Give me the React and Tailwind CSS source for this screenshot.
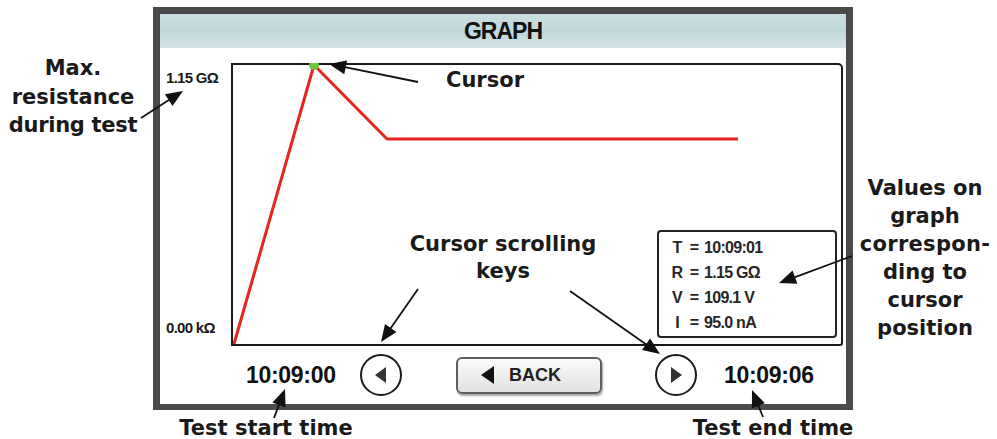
const annoFont = { fontFamily: '"DejaVu Sans", Verdana, sans-serif' };
const screenFont = { fontFamily: '"Liberation Sans", Arial, sans-serif' };

// arrows as [tailX, tailY, tipX, tipY]
const arrows = [
  [141, 118, 183, 91],
  [418, 82, 329, 64],
  [418, 289, 381, 342],
  [570, 291, 660, 354],
  [852, 256, 779, 283],
  [274, 418, 285, 389],
  [763, 417, 752, 390],
];

const Arrow = ({ a }) => {
  const [x1, y1, x2, y2] = a;
  const dx = x2 - x1;
  const dy = y2 - y1;
  const len = Math.hypot(dx, dy);
  const ux = dx / len;
  const uy = dy / len;
  const hl = 17;
  const hw = 7;
  const bx = x2 - ux * hl;
  const by = y2 - uy * hl;
  const pts = `${x2},${y2} ${bx - uy * hw},${by + ux * hw} ${bx + uy * hw},${by - ux * hw}`;
  return (
    <g>
      <line x1={x1} y1={y1} x2={bx + ux * 2} y2={by + uy * 2} stroke="#111" strokeWidth="1.8" />
      <polygon points={pts} fill="#111" />
    </g>
  );
};

const CircleKey = ({ dir }) => (
  <div className="w-[42px] h-[42px] rounded-full border-2 border-[#1c1c1c] bg-white flex items-center justify-center shrink-0">
    <svg width="16" height="18" viewBox="0 0 16 18">
      {dir === 'left' ? (
        <polygon points="13,1 13,17 2,9" fill="#333" />
      ) : (
        <polygon points="3,1 3,17 14,9" fill="#333" />
      )}
    </svg>
  </div>
);

const InfoRow = ({ k, v }) => (
  <div className="flex h-[25px] items-center">
    <span className="w-[16px] text-center">{k}</span>
    <span className="w-[18px] text-center">=</span>
    <span className="pl-[1px]">{v}</span>
  </div>
);

export default function App() {
  return (
    <div className="relative w-[997px] h-[439px] bg-white overflow-hidden">
      <div className="flex">
        {/* left annotation */}
        <div
          className="w-[153px] pr-[7px] pt-[54px] text-center text-[21px] font-bold leading-[28.5px] text-[#1a1a1a]"
          style={annoFont}
        >
          <div>Max.</div>
          <div>resistance</div>
          <div className="tracking-[-0.3px]">during test</div>
        </div>

        {/* device screen */}
        <div
          className="mt-[7px] w-[700px] h-[403px] border-l-[7px] border-r-[7px] border-t-[7px] border-b-[6px] border-[#4a4a4a] flex flex-col bg-white"
          style={screenFont}
        >
          <div className="h-[34px] bg-gradient-to-b from-[#cadfe2] via-[#c0d7da] to-[#d4e4e6] flex items-center justify-center">
            <span className="text-[23px] font-bold text-[#111] tracking-[-1px] scale-y-[1.05]">GRAPH</span>
          </div>

          <div className="flex pt-[15px] pr-[3px]">
            <div className="w-[71px] h-[283px] flex flex-col justify-between pl-[6px] pt-[4px] pb-[7px] text-[15px] font-bold text-[#1a1a1a] tracking-[-0.7px]">
              <span>1.15 GΩ</span>
              <span>0.00 kΩ</span>
            </div>

            <div className="relative w-[612px] h-[283px] border-2 border-[#1a1a1a] rounded-tr-[5px] rounded-br-[3px] bg-white">
              <svg className="absolute -left-[2px] -top-[2px]" width="612" height="283" viewBox="0 0 612 283">
                <polyline
                  points="3,281 83,2 156,76 507,76"
                  fill="none"
                  stroke="#e5261f"
                  strokeWidth="3"
                  strokeLinejoin="round"
                />
                <circle cx="83" cy="2" r="5" fill="#6cc53c" />
              </svg>

              <div className="absolute right-[4px] bottom-[6px] w-[180px] h-[108px] border-2 border-[#222] rounded-[4px] bg-white pl-[10px] pt-[3px] text-[16px] font-bold text-[#262626] tracking-[-0.7px]">
                <InfoRow k="T" v="10:09:01" />
                <InfoRow k="R" v="1.15 GΩ" />
                <InfoRow k="V" v="109.1 V" />
                <InfoRow k="I" v="95.0 nA" />
              </div>
            </div>
          </div>

          <div className="flex-1 flex items-center pl-[86px]">
            <span className="w-[91px] text-[23px] font-bold text-[#111] tracking-[-0.3px]">10:09:00</span>
            <div className="ml-[23px]">
              <CircleKey dir="left" />
            </div>
            <div className="ml-[54px] w-[146px] h-[37px] rounded-[6px] border-2 border-[#5e5e5e] bg-gradient-to-b from-[#fafafa] to-[#e2e2e2] shadow-[1px_2px_2px_rgba(0,0,0,0.35)] flex items-center pl-[22px] gap-[14px]">
              <svg width="15" height="20" viewBox="0 0 15 20">
                <polygon points="14,1 14,19 1,10" fill="#111" />
              </svg>
              <span className="text-[18px] font-bold text-[#222]">BACK</span>
            </div>
            <div className="ml-[53px]">
              <CircleKey dir="right" />
            </div>
            <span className="ml-[27px] text-[23px] font-bold text-[#111] tracking-[-0.3px]">10:09:06</span>
          </div>
        </div>

        {/* right annotation */}
        <div
          className="flex-1 pt-[174px] text-center text-[21px] font-bold leading-[28px] text-[#1a1a1a]"
          style={annoFont}
        >
          <div>Values on</div>
          <div>graph</div>
          <div className="tracking-[0.3px]">correspon-</div>
          <div>ding to</div>
          <div>cursor</div>
          <div>position</div>
        </div>
      </div>

      {/* bottom annotations */}
      <div className="flex pt-[4px] text-[21px] font-bold leading-[28px] text-[#1a1a1a]" style={annoFont}>
        <div className="ml-[176px] w-[180px] text-center">Test start time</div>
        <div className="ml-[334px] w-[166px] text-center">Test end time</div>
      </div>

      {/* labels lying over the screen */}
      <div
        className="absolute left-[446px] top-[66px] text-[21px] font-bold leading-[28px] text-[#1a1a1a]"
        style={annoFont}
      >
        Cursor
      </div>
      <div
        className="absolute left-[405px] top-[231px] w-[196px] text-center text-[21px] font-bold leading-[27px] text-[#1a1a1a] bg-white"
        style={annoFont}
      >
        <div>Cursor scrolling</div>
        <div>keys</div>
      </div>

      <svg className="absolute inset-0 pointer-events-none" width="997" height="439" viewBox="0 0 997 439">
        {arrows.map((a, i) => (
          <Arrow key={i} a={a} />
        ))}
      </svg>
    </div>
  );
}
